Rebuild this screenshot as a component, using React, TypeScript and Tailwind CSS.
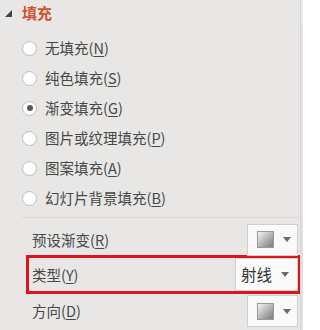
import React from 'react';

const font = { fontFamily: '"Noto Sans CJK SC", "Noto Sans", sans-serif' };

function Key({ k }: { k: string }) {
  return (
    <>
      (<span className="underline underline-offset-2">{k}</span>)
    </>
  );
}

function Radio({ label, k, checked }: { label: string; k: string; checked?: boolean }) {
  return (
    <div className="flex h-[30px] items-center">
      <span className="ml-[22px] flex h-[15px] w-[15px] items-center justify-center rounded-full border border-[#bdbdbd] bg-white">
        {checked && <span className="h-[6px] w-[6px] rounded-full bg-[#5a5a5a]" />}
      </span>
      <span className="ml-[8px] text-[14.5px] text-[#474747]">
        {label}
        <Key k={k} />
      </span>
    </div>
  );
}

function Arrow() {
  return (
    <svg width="8" height="5" viewBox="0 0 8 5" className="ml-[9px]">
      <polygon points="0,0 8,0 4,5" fill="#6b6b6b" />
    </svg>
  );
}

function SwatchBox() {
  return (
    <div className="flex h-[32px] w-[51px] items-center border border-[#cfcfcf] bg-[#fafafa] pl-[9px]">
      <span className="h-[17px] w-[17px] border border-[#9a9a9a] bg-gradient-to-br from-[#f7f7f7] to-[#7c7c7c]" />
      <Arrow />
    </div>
  );
}

export default function App() {
  return (
    <div className="relative h-[330px] w-[303px] overflow-hidden bg-[#e8e7e6]" style={font}>
      <div className="flex h-[26px] items-center pl-[5px]">
        <svg width="7" height="7" viewBox="0 0 7 7">
          <polygon points="7,0 7,7 0,7" fill="#454545" />
        </svg>
        <span className="ml-[10px] text-[15px] font-bold text-[#d4502f]">填充</span>
      </div>

      <div className="mt-[7px] flex flex-col">
        <Radio label="无填充" k="N" />
        <Radio label="纯色填充" k="S" />
        <Radio label="渐变填充" k="G" checked />
        <Radio label="图片或纹理填充" k="P" />
        <Radio label="图案填充" k="A" />
        <Radio label="幻灯片背景填充" k="B" />
      </div>

      <div className="ml-[22px] mr-[4px] mt-[4px] h-px bg-[#d9d8d7]" />

      <div className="mt-[6px] flex h-[31px] items-center justify-between pl-[32px] pr-[5px]">
        <span className="text-[14.5px] text-[#474747]">
          预设渐变<Key k="R" />
        </span>
        <SwatchBox />
      </div>

      <div className="ml-[26px] mr-[2px] flex h-[39px] items-center justify-between border-[3px] border-[#dc141c] pl-[3px]">
        <span className="text-[14.5px] text-[#474747]">
          类型<Key k="Y" />
        </span>
        <div className="flex h-[33px] w-[63px] items-center border border-[#cfcfcf] bg-[#fafafa] pl-[5px]">
          <span className="text-[15.5px] text-[#333]">射线</span>
          <Arrow />
        </div>
      </div>

      <div className="flex h-[34px] items-center justify-between pl-[32px] pr-[5px]">
        <span className="text-[14.5px] text-[#474747]">
          方向<Key k="D" />
        </span>
        <SwatchBox />
      </div>

      <div className="absolute right-0 top-0 h-full w-[3px] border-l border-[#d6d5d4] bg-[#e2e1e0]">
        <div className="h-[23px] bg-[#efefef]" />
      </div>
    </div>
  );
}
